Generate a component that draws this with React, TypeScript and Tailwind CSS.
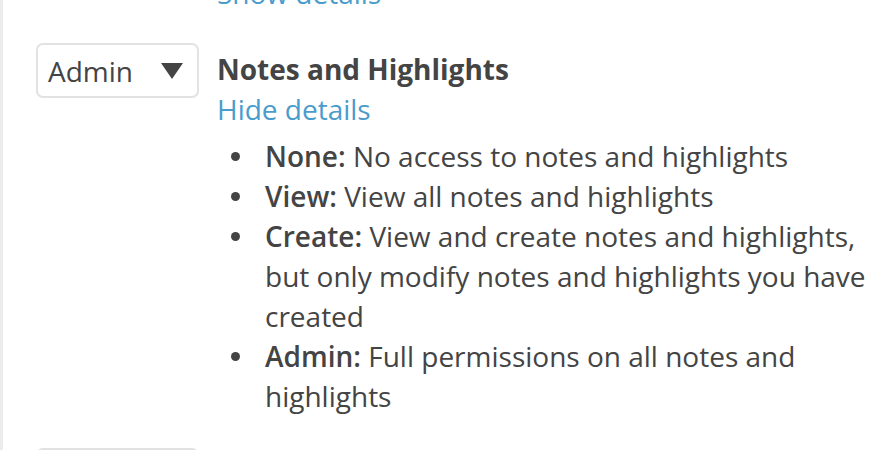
import React from "react";

const levels = [
  { name: "None", text: "No access to notes and highlights" },
  { name: "View", text: "View all notes and highlights" },
  {
    name: "Create",
    text: "View and create notes and highlights, but only modify notes and highlights you have created",
  },
  { name: "Admin", text: "Full permissions on all notes and highlights" },
];

function RoleSelect({ value }: { value: string }) {
  return (
    <div className="w-[163px] h-[55px] shrink-0 border-2 border-[#e2e2e2] rounded-[7px] bg-white flex items-center justify-between pl-[10px] pr-[14px] text-[28px] text-[#444]">
      <span>{value}</span>
      <svg width="22" height="16" viewBox="0 0 22 16">
        <polygon points="0,0 22,0 11,16" fill="#444" />
      </svg>
    </div>
  );
}

export default function App() {
  return (
    <div className="h-[450px] overflow-hidden bg-white font-['Open_Sans',sans-serif] text-[#444] border-l-[3px] border-[#ececec] pl-[33px] flex flex-col">
      {/* tail of the previous permission row */}
      <div className="-mt-[27px] pl-[181px] text-[28px] leading-[40px] text-[#4a9ccc] shrink-0">
        Show details
      </div>

      <div className="flex gap-[18px] mt-[30px] shrink-0">
        <RoleSelect value="Admin" />
        <div className="flex-1 min-w-0 pt-[6px] pr-[22px] text-[28px] leading-[40px]">
          <h3 className="font-bold">Notes and Highlights</h3>
          <a className="text-[#4a9ccc] cursor-pointer">Hide details</a>
          <ul className="mt-[7px]">
            {levels.map((l) => (
              <li key={l.name} className="flex">
                <span className="w-[48px] h-[40px] shrink-0 flex items-center pl-[14px]">
                  <span className="w-[9px] h-[9px] rounded-full bg-[#444]" />
                </span>
                <span>
                  <b className="font-semibold">{l.name}:</b> {l.text}
                </span>
              </li>
            ))}
          </ul>
        </div>
      </div>

      <div className="flex gap-[18px] mt-[32px] shrink-0">
        <RoleSelect value="Admin" />
      </div>
    </div>
  );
}
